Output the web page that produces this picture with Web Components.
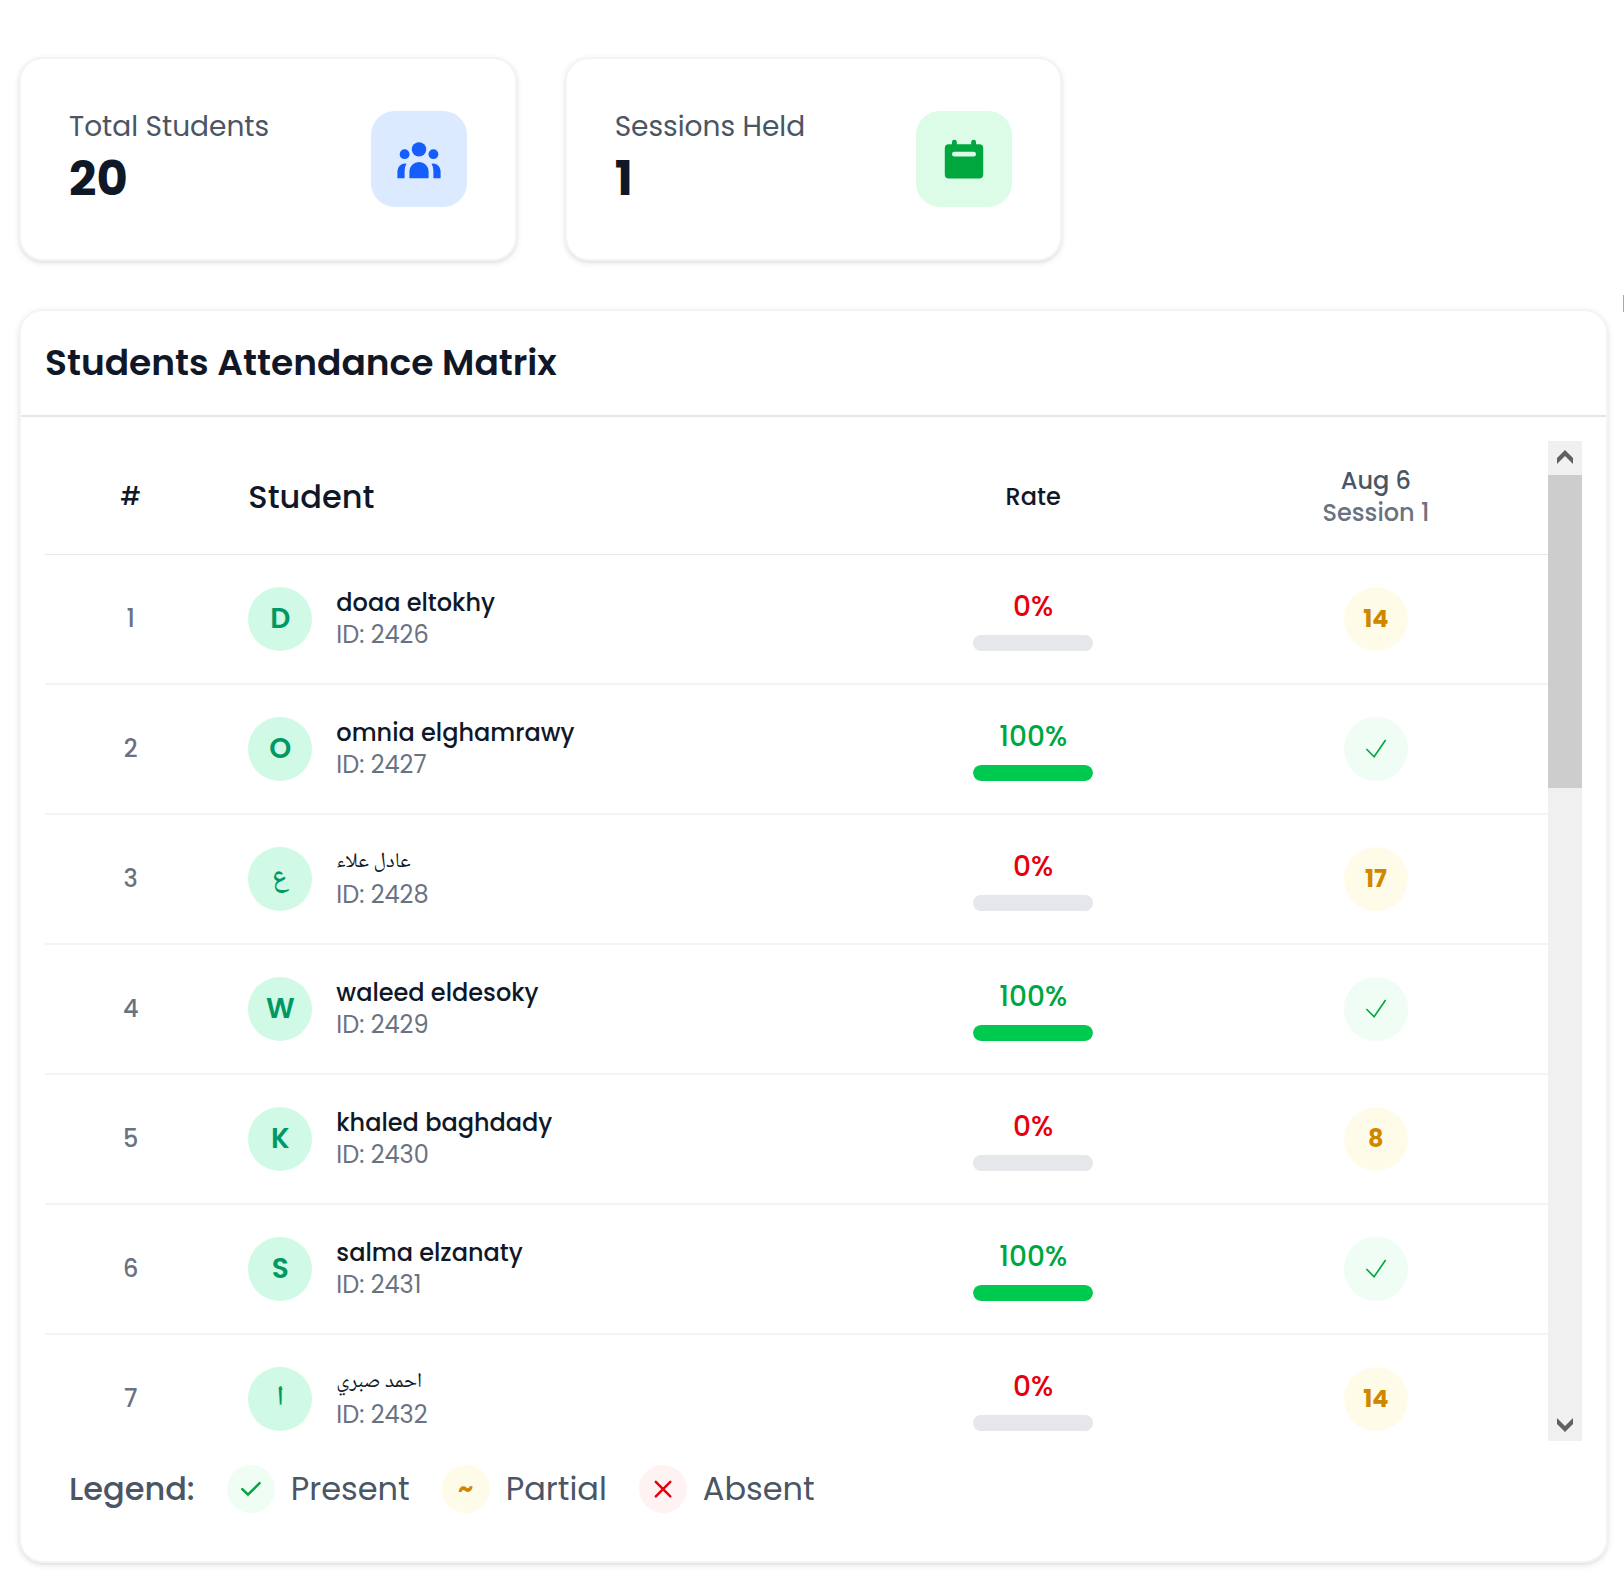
<!DOCTYPE html>
<html lang="en">
<head>
<meta charset="utf-8">
<meta name="viewport" content="width=device-width, initial-scale=1">
<title>Students Attendance</title>
<style>
  html, body { margin: 0; background: #fff; }
  body {
    font-family: Poppins, Inter, "DejaVu Sans", sans-serif;
    color: #101828;
    --ink: #101828; --muted: #4a5565; --soft: #6a7282;
    --line: #e5e7eb; --edge: #f3f4f6;
  }
</style>
</head>
<body>
<attendance-page>
  <stat-card slot="stats" label="Total Students" value="20" tone="blue">
    <svg slot="icon" width="48" height="48" viewBox="0 0 48 48" fill="currentColor" aria-hidden="true">
      <circle cx="24" cy="14.4" r="7.2"/><circle cx="9.6" cy="19.2" r="4.9"/><circle cx="38.4" cy="19.2" r="4.9"/>
      <path d="M14.4 43.2V36.6a9.6 9.6 0 0 1 19.2 0v6.6z"/>
      <path d="M2.4 43.2V36.2a7.6 7.6 0 0 1 7.6-7.6q.8 0 1.5.2Q9.6 31.8 9.6 36v7.2z"/>
      <path d="M45.6 43.2V36.2a7.6 7.6 0 0 0-7.6-7.6q-.8 0-1.5.2Q38.4 31.8 38.4 36v7.2z"/>
    </svg>
  </stat-card>
  <stat-card slot="stats" label="Sessions Held" value="1" tone="green">
    <svg slot="icon" width="48" height="48" viewBox="0 0 48 48" fill="currentColor" aria-hidden="true">
      <path fill-rule="evenodd" d="M12 9.2V7.1a2.4 2.4 0 0 1 4.8 0v2.1h14.4V7.1a2.4 2.4 0 0 1 4.8 0v2.1h3.2a4 4 0 0 1 4 4v26.4a4 4 0 0 1-4 4H8.800a4 4 0 0 1-4-4V13.200a4 4 0 0 1 4-4zM14.400 16.800a2.400 2.400 0 0 0 0 4.800h19.200a2.400 2.400 0 0 0 0-4.800z"/>
    </svg>
  </stat-card>
  <matrix-panel heading="Students Attendance Matrix">
    <attendance-table></attendance-table>
    <attendance-legend slot="footer"></attendance-legend>
  </matrix-panel>
</attendance-page>

<script>
  const define = (name, html, setup) => {
    const template = document.createElement('template');
    template.innerHTML = html;
    customElements.define(name, class extends HTMLElement {
      constructor() {
        super();
        this.attachShadow({ mode: 'open' }).append(template.content.cloneNode(true));
      }
      connectedCallback() { if (setup) setup(this, this.shadowRoot); }
    });
  };

  define('attendance-page', `
    <style>
      :host { display: block; padding: 57px 16px 20px 19px; }
      .stats { display: grid; grid-template-columns: repeat(3, 1fr); gap: 48px; margin-bottom: 48px; }
      .edge { position: absolute; top: 295px; right: 0; width: 1px; height: 17px; background: #a8a8a8; }
    </style>
    <section class="stats"><slot name="stats"></slot></section>
    <slot></slot>
    <div class="edge"></div>`);

  define('stat-card', `
    <style>
      :host { display: flex; align-items: center; justify-content: space-between; padding: 48px;
        background: #fff; border: 2px solid var(--edge); border-radius: 24px;
        box-shadow: 0 2px 6px rgb(0 0 0 / .1), 0 2px 4px -2px rgb(0 0 0 / .1); }
      p { margin: 0; }
      .label { font-size: 28px; line-height: 40px; color: var(--muted); }
      .value { font-size: 48px; line-height: 64px; font-weight: 700; color: var(--ink); }
      .icon { display: flex; align-items: center; justify-content: center; width: 96px; height: 96px; border-radius: 24px; }
      .blue { background: #dbeafe; color: #155dfc; }
      .green { background: #dcfce7; color: #00a63e; }
    </style>
    <div><p class="label"></p><p class="value"></p></div>
    <div class="icon"><slot name="icon"></slot></div>`,
    (el, root) => {
      root.querySelector('.label').textContent = el.getAttribute('label');
      root.querySelector('.value').textContent = el.getAttribute('value');
      root.querySelector('.icon').classList.add(el.getAttribute('tone'));
    });

  define('matrix-panel', `
    <style>
      :host { display: block; background: #fff; border: 2px solid var(--edge); border-radius: 24px;
        box-shadow: 0 2px 6px rgb(0 0 0 / .1), 0 2px 4px -2px rgb(0 0 0 / .1); }
      h2 { margin: 0; padding: 24px; border-bottom: 2px solid var(--line);
        font-size: 36px; line-height: 56px; font-weight: 600; color: var(--ink); }
      .body { padding: 24px; }
    </style>
    <h2></h2>
    <div class="body"><slot></slot><slot name="footer"></slot></div>`,
    (el, root) => { root.querySelector('h2').textContent = el.getAttribute('heading'); });

  define('student-cell', `
    <style>
      :host { display: flex; align-items: center; gap: 24px; }
      .avatar { flex: none; display: flex; align-items: center; justify-content: center; width: 64px; height: 64px;
        border-radius: 50%; background: #d0fae5; color: #009966; font-size: 28px; line-height: 40px; font-weight: 600; }
      .name { font-size: 24px; line-height: 32px; font-weight: 500; color: var(--ink); }
      .id { font-size: 24px; line-height: 32px; font-weight: 400; color: var(--soft); }
      :host([lang="ar"]) .avatar, :host([lang="ar"]) .name {
        font-family: "Noto Naskh Arabic", Amiri, "DejaVu Sans", sans-serif; }
      :host([lang="ar"]) .name { font-size: 21px; font-weight: 400; }
    </style>
    <div class="avatar"></div>
    <div><div class="name"><slot></slot></div><div class="id"></div></div>`,
    (el, root) => {
      root.querySelector('.avatar').textContent = el.textContent.trim()[0].toUpperCase();
      root.querySelector('.id').textContent = 'ID: ' + el.getAttribute('student-id');
    });

  define('rate-meter', `
    <style>
      :host { display: flex; flex-direction: column; align-items: center; gap: 8px; }
      .text { font-size: 28px; line-height: 40px; font-weight: 500; color: #e7000b; }
      .full { color: #00a63e; }
      .track { width: 120px; height: 16px; border-radius: 8px; background: var(--line); overflow: hidden; }
      .fill { height: 100%; border-radius: 8px; background: #00c950; }
    </style>
    <div class="text"></div><div class="track"><div class="fill"></div></div>`,
    (el, root) => {
      const value = el.getAttribute('value') + '%';
      const text = root.querySelector('.text');
      text.textContent = value;
      text.classList.toggle('full', value === '100%');
      root.querySelector('.fill').style.width = value;
    });

  define('status-dot', `
    <style>
      :host { display: inline-flex; align-items: center; justify-content: center; vertical-align: top;
        width: 64px; height: 64px; border-radius: 50%; background: #fefce8; color: #d08700;
        font-size: 24px; line-height: 32px; font-weight: 700; }
      :host([size="small"]) { width: 48px; height: 48px; }
      :host([kind="present"]) { background: #f0fdf4; color: #00a63e; }
      :host([kind="absent"]) { background: #fef2f2; color: #e7000b; }
    </style>
    <slot></slot>`);

  define('scroll-rail', `
    <style>
      :host { display: flex; flex-direction: column; width: 34px; background: #f0f0f0; }
      button { display: flex; width: 34px; height: 34px; padding: 0; border: 0; background: none; color: #606060; }
      .thumb { height: 313px; background: #cdcdcd; }
      .rest { flex: 1; }
    </style>
    <button aria-label="Scroll up"><svg width="34" height="34" viewBox="0 0 34 34" fill="currentColor"><path d="M17 9l8 8v6l-8-8-8 8v-6z"/></svg></button>
    <div class="thumb"></div><div class="rest"></div>
    <button aria-label="Scroll down"><svg width="34" height="34" viewBox="0 0 34 34" fill="currentColor"><path d="M17 25l8-8v-6l-8 8-8-8v6z"/></svg></button>`);

  const students = [
    ['doaa eltokhy', 2426, 14], ['omnia elghamrawy', 2427, null], ['عادل علاء', 2428, 17],
    ['waleed eldesoky', 2429, null], ['khaled baghdady', 2430, 8], ['salma elzanaty', 2431, null],
    ['احمد صبري', 2432, 14]
  ];
  const tick = '<svg width="64" height="64" viewBox="0 0 64 64" fill="none" stroke="currentColor" stroke-width="1.6" role="img" aria-label="Present"><path d="M22.400 32L30.100 39.700L41.600 23"/></svg>';

  define('attendance-table', `
    <style>
      :host { display: flex; height: 1000px; }
      .view { flex: 1; min-width: 0; overflow: hidden; }
      table { width: 100%; table-layout: fixed; border-collapse: separate; border-spacing: 0; }
      th, td { text-align: center; padding: 0; }
      th { padding: 24px 0 25px; border-bottom: 1px solid var(--line); font-size: 24px; line-height: 32px; font-weight: 500; color: var(--ink); }
      td { padding: 32px 0; border-bottom: 2px solid var(--edge); font-size: 24px; line-height: 32px; font-weight: 500; color: var(--soft); }
      .student { padding-left: 32px; text-align: left; }
      th.student { font-size: 32px; }
      .date { display: block; color: var(--muted); }
      .session { display: block; color: var(--soft); }
      .c-num { width: 11.4%; } .c-name { width: 43%; } .c-rate { width: 22.7%; } .c-session { width: 22.9%; }
    </style>
    <div class="view">
      <table>
        <colgroup><col class="c-num"><col class="c-name"><col class="c-rate"><col class="c-session"></colgroup>
        <thead><tr><th>#</th><th class="student">Student</th><th>Rate</th>
          <th><span class="date">Aug 6</span><span class="session">Session 1</span></th></tr></thead>
        <tbody></tbody>
      </table>
    </div>
    <scroll-rail></scroll-rail>`,
    (el, root) => {
      root.querySelector('tbody').innerHTML = students.map(([name, id, minutes], i) => `
        <tr><td>${i + 1}</td>
          <td class="student"><student-cell lang="${/[\u0600-\u06ff]/.test(name) ? 'ar' : 'en'}" student-id="${id}">${name}</student-cell></td>
          <td><rate-meter value="${minutes === null ? 100 : 0}"></rate-meter></td>
          <td>${minutes === null ? `<status-dot kind="present">${tick}</status-dot>` : `<status-dot kind="partial">${minutes}</status-dot>`}</td></tr>`).join('');
    });

  define('attendance-legend', `
    <style>
      :host { display: flex; align-items: center; gap: 32px; padding: 24px; font-size: 32px; line-height: 48px; color: var(--muted); }
      .title { font-weight: 500; }
      .item { display: flex; align-items: center; gap: 16px; }
      svg { fill: none; stroke: currentColor; stroke-width: 2.5; stroke-linecap: round; stroke-linejoin: round; }
    </style>
    <span class="title">Legend:</span>
    <span class="item"><status-dot size="small" kind="present"><svg width="48" height="48" viewBox="0 0 48 48" aria-hidden="true"><path d="M15.300 24.200L21 29.700L32.600 18.200"/></svg></status-dot>Present</span>
    <span class="item"><status-dot size="small" kind="partial">~</status-dot>Partial</span>
    <span class="item"><status-dot size="small" kind="absent"><svg width="48" height="48" viewBox="0 0 48 48" aria-hidden="true"><path d="M16.800 16.800L31.300 31.300M31.300 16.800L16.800 31.300"/></svg></status-dot>Absent</span>`);
</script>
</body>
</html>
